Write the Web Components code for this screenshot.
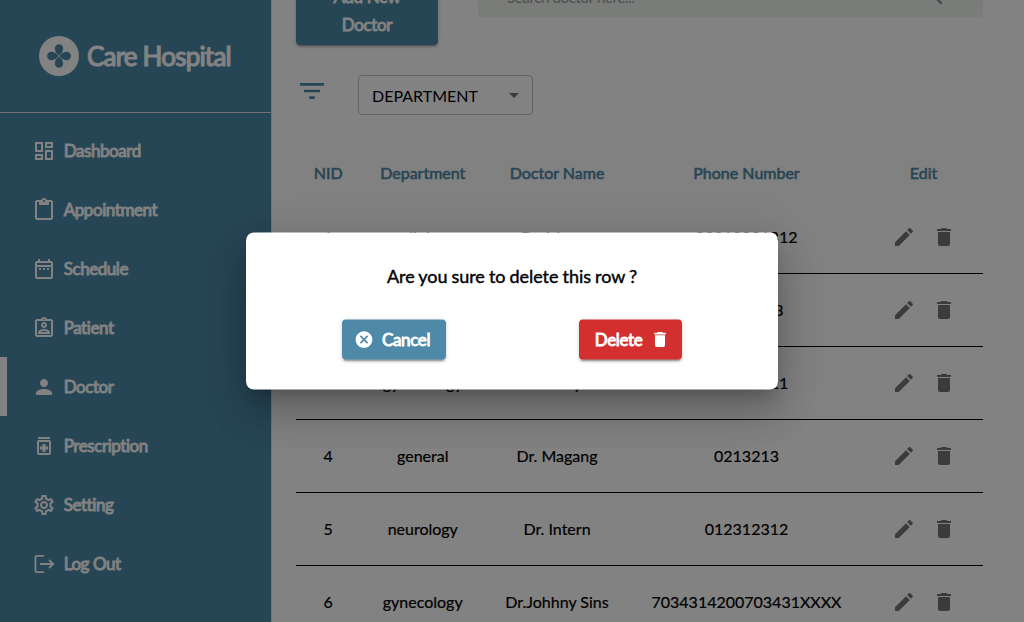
<!DOCTYPE html>
<html lang="en"><head><meta charset="utf-8"><title>Care Hospital</title>
<style>
html,body{margin:0;height:100%;overflow:hidden;background:#fff}
body{font-family:Lato,"Open Sans",sans-serif;color:#000}
</style></head><body>
<care-app></care-app>
<script>
const ICONS={
dashboard:'<path d="M19 5v2h-4V5h4M9 5v6H5V5h4m10 8v6h-4v-6h4M9 17v2H5v-2h4M21 3h-8v6h8V3zM11 3H3v10h8V3zm10 8h-8v10h8V11zm-10 4H3v6h8v-6z"/>',
paste:'<path d="M19 2h-4.18C14.4.84 13.3 0 12 0S9.6.84 9.18 2H5c-1.1 0-2 .9-2 2v16c0 1.1.9 2 2 2h14c1.1 0 2-.9 2-2V4c0-1.1-.9-2-2-2zm-7 0c.55 0 1 .45 1 1s-.45 1-1 1-1-.45-1-1 .45-1 1-1zm7 18H5V4h2v3h10V4h2v16z"/>',
date:'<path d="M7 11h2v2H7v-2zm14-5v14c0 1.1-.9 2-2 2H5c-1.11 0-2-.9-2-2l.01-14c0-1.1.88-2 1.99-2h1V2h2v2h8V2h2v2h1c1.1 0 2 .9 2 2zM5 8h14V6H5v2zm14 12V10H5v10h14zm-4-7h2v-2h-2v2zm-4 0h2v-2h-2v2z"/>',
patient:'<path d="M19 3h-4.18C14.4 1.84 13.3 1 12 1s-2.4.84-2.82 2H5c-1.1 0-2 .9-2 2v14c0 1.1.9 2 2 2h14c1.1 0 2-.9 2-2V5c0-1.1-.9-2-2-2zm-7-.25c.41 0 .75.34.75.75s-.34.75-.75.75-.75-.34-.75-.75.34-.75.75-.75zM19 19H5V5h14v14zM12 6c-1.65 0-3 1.35-3 3s1.35 3 3 3 3-1.35 3-3-1.35-3-3-3zm0 4c-.55 0-1-.45-1-1s.45-1 1-1 1 .45 1 1-.45 1-1 1zm-6 6.47V18h12v-1.53c0-2.5-3.97-3.58-6-3.58s-6 1.07-6 3.58zM8.31 16c.69-.56 2.38-1.12 3.69-1.12s3.01.56 3.69 1.12H8.31z"/>',
person:'<path d="M12 12c2.21 0 4-1.79 4-4s-1.79-4-4-4-4 1.79-4 4 1.79 4 4 4zm0 2c-2.67 0-8 1.34-8 4v2h16v-2c0-2.66-5.33-4-8-4z"/>',
med:'<path d="M6 3h12v2H6V3zm11 3H7c-1.1 0-2 .9-2 2v11c0 1.1.9 2 2 2h10c1.1 0 2-.9 2-2V8c0-1.1-.9-2-2-2zm0 13H7V8h10v11zm-6.5-1h3v-2.5H16v-3h-2.5V10h-3v2.5H8v3h2.5V18z"/>',
gear:'<path d="M19.43 12.98c.04-.32.07-.64.07-.98 0-.34-.03-.66-.07-.98l2.11-1.65c.19-.15.24-.42.12-.64l-2-3.46c-.09-.16-.26-.25-.44-.25-.06 0-.12.01-.17.03l-2.49 1c-.52-.4-1.08-.73-1.69-.98l-.38-2.65C14.46 2.18 14.25 2 14 2h-4c-.25 0-.46.18-.49.42l-.38 2.65c-.61.25-1.17.59-1.69.98l-2.49-1c-.06-.02-.12-.03-.18-.03-.17 0-.34.09-.43.25l-2 3.46c-.13.22-.07.49.12.64l2.11 1.65c-.04.32-.07.65-.07.98 0 .33.03.66.07.98l-2.11 1.65c-.19.15-.24.42-.12.64l2 3.46c.09.16.26.25.44.25.06 0 .12-.01.17-.03l2.49-1c.52.4 1.08.73 1.69.98l.38 2.65c.03.24.24.42.49.42h4c.25 0 .46-.18.49-.42l.38-2.65c.61-.25 1.17-.59 1.69-.98l2.49 1c.06.02.12.03.18.03.17 0 .34-.09.43-.25l2-3.46c.12-.22.07-.49-.12-.64l-2.11-1.65zm-1.98-1.71c.04.31.05.52.05.73 0 .21-.02.43-.05.73l-.14 1.13.89.7 1.08.84-.7 1.21-1.27-.51-1.04-.42-.9.68c-.43.32-.84.56-1.25.73l-1.06.43-.16 1.13-.2 1.35h-1.4l-.19-1.35-.16-1.13-1.06-.43c-.43-.18-.83-.41-1.23-.71l-.91-.7-1.06.43-1.27.51-.7-1.21 1.08-.84.89-.7-.14-1.13c-.03-.31-.05-.54-.05-.74s.02-.43.05-.73l.14-1.13-.89-.7-1.08-.84.7-1.21 1.27.51 1.04.42.9-.68c.43-.32.84-.56 1.25-.73l1.06-.43.16-1.13.2-1.35h1.39l.19 1.35.16 1.13 1.06.43c.43.18.83.41 1.23.71l.91.7 1.06-.43 1.27-.51.7 1.21-1.07.85-.89.7.14 1.13zM12 8c-2.21 0-4 1.79-4 4s1.79 4 4 4 4-1.79 4-4-1.79-4-4-4zm0 6c-1.1 0-2-.9-2-2s.9-2 2-2 2 .9 2 2-.9 2-2 2z"/>',
logout:'<path d="M12 3.9H4.4c-.6 0-1 .4-1 1v14.2c0 .6.4 1 1 1H12M8 12h13M17 8l4.200 4-4.200 4" fill="none" stroke="currentColor" stroke-width="1.8"/>',
filter:'<path d="M10 18h4v-2h-4v2zM3 6v2h18V6H3zm3 7h12v-2H6v2z"/>',
search:'<path d="M15.5 14h-.79l-.28-.27C15.41 12.59 16 11.11 16 9.5 16 5.91 13.09 3 9.5 3S3 5.91 3 9.5 5.91 16 9.5 16c1.61 0 3.09-.59 4.23-1.57l.27.28v.79l5 4.99L20.49 19l-4.99-5zm-6 0C7.01 14 5 11.99 5 9.5S7.01 5 9.5 5 14 7.01 14 9.5 11.99 14 9.5 14z"/>',
edit:'<path d="M3 17.25V21h3.75L17.81 9.94l-3.75-3.75L3 17.25zM20.71 7.04c.39-.39.39-1.02 0-1.41l-2.34-2.34c-.39-.39-1.02-.39-1.41 0l-1.83 1.83 3.75 3.75 1.83-1.83z"/>',
trash:'<path d="M6 19c0 1.1.9 2 2 2h8c1.1 0 2-.9 2-2V7H6v12zM19 4h-3.5l-1-1h-5l-1 1H5v2h14V4z"/>',
drop:'<path d="M7 10l5 5 5-5z"/>',
cancel:'<path d="M12 2C6.47 2 2 6.47 2 12s4.47 10 10 10 10-4.47 10-10S17.53 2 12 2zm5 13.59L15.59 17 12 13.41 8.41 17 7 15.59 10.59 12 7 8.41 8.41 7 12 10.59 15.59 7 17 8.41 13.41 12 17 15.59z"/>',
logo:'<path fill-rule="evenodd" d="M12 0a12 12 0 1 0 0 24a12 12 0 0 0 0-24zM12 11.700C10.600 10.600 9.500 9.400 9.500 7.400a2.500 2.500 0 0 1 5 0C14.500 9.400 13.400 10.600 12 11.700zM12 12.300C13.400 13.400 14.500 14.600 14.500 16.600a2.500 2.500 0 0 1-5 0C9.500 14.600 10.600 13.400 12 12.300zM11.700 12C10.600 13.400 9.400 14.500 7.400 14.500a2.500 2.500 0 0 1 0-5C9.400 9.500 10.600 10.600 11.700 12zM12.300 12C13.400 10.600 14.600 9.500 16.600 9.500a2.500 2.500 0 0 1 0 5C14.600 14.500 13.400 13.400 12.300 12z"/>'
};
const define=(name,html)=>customElements.define(name,class extends HTMLElement{
 constructor(){super();this.attachShadow({mode:'open'});}
 connectedCallback(){this.shadowRoot.innerHTML=typeof html==='function'?html(this):html;}
});
define('ui-icon',e=>`<style>:host{display:block;flex:none;width:24px;height:24px}svg{display:block;width:100%;height:100%;fill:currentColor}</style><svg viewBox="0 0 24 24">${ICONS[e.getAttribute('name')]}</svg>`);
define('nav-item',e=>`<style>:host{display:flex;align-items:center;gap:8px;height:59px;padding-left:25px;border-left:7px solid transparent;box-sizing:border-box;font-weight:400;font-size:17px;letter-spacing:-.43px;-webkit-text-stroke:.9px}
:host([active]){border-left-color:#fff}span{margin-left:-.3px}</style><ui-icon name="${e.getAttribute('icon')}"></ui-icon><span><slot></slot></span>`);
define('side-bar',`<style>:host{display:block;width:271px;height:622px;flex:none;background:#4e89a8;color:#fff}
header{display:flex;align-items:center;box-sizing:border-box;height:113px;padding-left:39px;gap:8px;border-bottom:1px solid #e0e0e0;font-weight:400;font-size:26px;letter-spacing:-.8px;-webkit-text-stroke:1.2px}
header ui-icon{width:40px;height:40px}nav{padding-top:8px}</style>
<header><ui-icon name="logo"></ui-icon><span>Care Hospital</span></header>
<nav><nav-item icon="dashboard">Dashboard</nav-item><nav-item icon="paste">Appointment</nav-item><nav-item icon="date">Schedule</nav-item><nav-item icon="patient">Patient</nav-item><nav-item icon="person" active>Doctor</nav-item><nav-item icon="med">Prescription</nav-item><nav-item icon="gear">Setting</nav-item><nav-item icon="logout">Log Out</nav-item></nav>`);
define('ui-button',`<style>:host{display:flex;align-items:center;justify-content:center;box-sizing:border-box;border-radius:4px;color:#fff;background:#4e89a8;font-weight:400;font-size:17px;line-height:28px;letter-spacing:-.35px;-webkit-text-stroke:.9px;text-align:center;box-shadow:0 3px 1px -2px rgba(0,0,0,.2),0 2px 2px rgba(0,0,0,.14),0 1px 5px rgba(0,0,0,.12)}
:host([danger]){background:#d32f2f}</style><slot></slot>`);
define('tool-bar',`<style>:host{display:flex;justify-content:space-between;height:73px;margin-top:-28px}
ui-button{width:142px;padding-top:5px}
.search{display:flex;align-items:center;justify-content:space-between;box-sizing:border-box;width:505px;height:45px;border-radius:4px;background:#eef3eb;padding:5px 37px 0 29px;font-size:15px;letter-spacing:-.35px;color:#999}
.search ui-icon{color:#80839a;margin-top:-3px}</style><ui-button><span>Add New<br>Doctor</span></ui-button><div class="search"><span>Search doctor here...</span><ui-icon name="search"></ui-icon></div>`);
define('filter-bar',`<style>:host{display:flex;margin-top:30px;height:40px}
.f{width:32px;height:32px;margin-right:30px;color:#4e89a8}
.select{display:flex;align-items:center;justify-content:space-between;box-sizing:border-box;width:175px;height:40px;border:1px solid #c4c4c4;border-radius:4px;padding:1px 6px 0 13px;font-size:16px;color:#000}
.select ui-icon{color:#757575;margin-top:-2px}</style><ui-icon class="f" name="filter"></ui-icon><div class="select"><span>DEPARTMENT</span><ui-icon name="drop"></ui-icon></div>`);
define('doctor-row',e=>`<style>:host{display:grid;grid-template-columns:64.5px 124.5px 144px 235px 119px;align-items:center;text-align:center;height:73px;box-sizing:border-box;border-bottom:1px solid #000;font-size:16px;-webkit-text-stroke:.2px}
:host([head]){height:56px;border:0;background:#fdfdfd;color:#4e89a8;-webkit-text-stroke:.6px}
span{margin-top:-2px}.a{display:flex;gap:16px;padding-left:28px;color:#757575}</style>${e.getAttribute('cells').split('|').map(c=>`<span>${c}</span>`).join('')}${e.hasAttribute('head')?'<span>Edit</span>':'<div class="a"><ui-icon name="edit"></ui-icon><ui-icon name="trash"></ui-icon></div>'}`);
define('doctor-table',`<style>:host{display:block;margin-top:30px;width:687px}</style>
<doctor-row head cells="NID|Department|Doctor Name|Phone Number"></doctor-row>
<doctor-row cells="1|radiology|Dr. Mason|00010001312"></doctor-row>
<doctor-row cells="2|medicine|Dr. Salman|01312313"></doctor-row>
<doctor-row cells="3|gynecology|Dr. Tanya|012312321"></doctor-row>
<doctor-row cells="4|general|Dr. Magang|0213213"></doctor-row>
<doctor-row cells="5|neurology|Dr. Intern|012312312"></doctor-row>
<doctor-row cells="6|gynecology|Dr.Johhny Sins|7034314200703431XXXX"></doctor-row>`);
define('confirm-dialog',`<style>:host{position:absolute;inset:0;display:flex;align-items:center;justify-content:center;box-sizing:border-box;padding-bottom:1px;background:rgba(0,0,0,.49)}
section{box-sizing:border-box;width:532px;height:157px;transform:translateY(.5px);border-radius:8px;background:#fff;padding-top:31px;box-shadow:0 11px 15px -7px rgba(0,0,0,.2),0 24px 38px 3px rgba(0,0,0,.14),0 9px 46px 8px rgba(0,0,0,.12)}
h2{margin:0;text-align:center;font-size:18px;font-weight:400;line-height:24px;letter-spacing:-.06px;word-spacing:-.4px;-webkit-text-stroke:.4px}
div{display:flex;justify-content:space-between;padding:32px 96px 0}
ui-button{height:40px}.c{width:104px;gap:8px}.c ui-icon{margin-left:-4px}.d ui-icon{margin-right:-4px}.d{width:103px;gap:8px}ui-icon{width:20px;height:20px}</style>
<section><h2>Are you sure to delete this row ?</h2><div><ui-button class="c"><ui-icon name="cancel"></ui-icon><span>Cancel</span></ui-button><ui-button class="d" danger><span>Delete</span><ui-icon name="trash"></ui-icon></ui-button></div></section>`);
define('care-app',`<style>:host{display:flex;position:relative;height:622px;overflow:hidden}main{flex:1;border-left:1px solid #e4e4e4;padding-left:24px;padding-right:41px}</style>
<side-bar></side-bar><main><tool-bar></tool-bar><filter-bar></filter-bar><doctor-table></doctor-table></main><confirm-dialog></confirm-dialog>`);
</script></body></html>
